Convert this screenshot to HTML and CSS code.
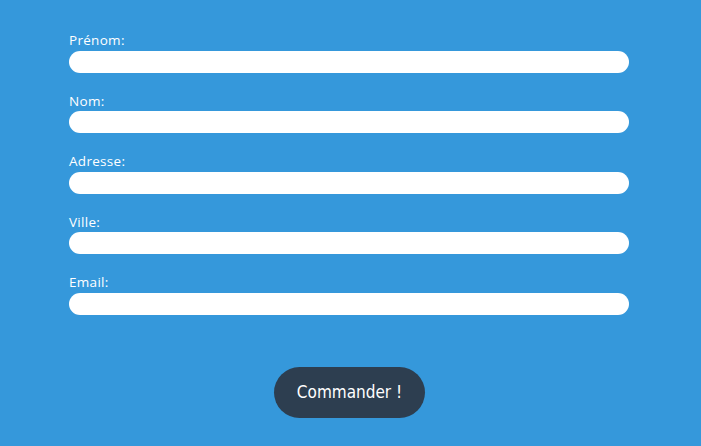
FILE: index.html
```html
<!DOCTYPE html>
<html lang="fr">
<head>
<meta charset="utf-8">
<link rel="stylesheet" href="styles.css">
</head>
<body>
<form class="order-form">
  <div class="field">
    <label class="field-label" for="prenom">Prénom:</label>
    <input class="field-input" id="prenom" type="text">
  </div>
  <div class="field">
    <label class="field-label" for="nom">Nom:</label>
    <input class="field-input" id="nom" type="text">
  </div>
  <div class="field">
    <label class="field-label" for="adresse">Adresse:</label>
    <input class="field-input" id="adresse" type="text">
  </div>
  <div class="field">
    <label class="field-label" for="ville">Ville:</label>
    <input class="field-input" id="ville" type="text">
  </div>
  <div class="field">
    <label class="field-label" for="email">Email:</label>
    <input class="field-input" id="email" type="email">
  </div>
  <div class="actions">
    <button class="submit-btn" type="button">Commander !</button>
  </div>
</form>
</body>
</html>
```

FILE: styles.css
```css
html, body {
  margin: 0;
  padding: 0;
  background: #3598db;
  height: 100%;
}
body {
  font-family: "Open Sans", "DejaVu Sans", sans-serif;
  overflow: hidden;
}
.order-form {
  width: 560px;
  margin: 0 0 0 69px;
  padding-top: 32px;
  display: flex;
  flex-direction: column;
}
.field {
  display: flex;
  flex-direction: column;
  margin-bottom: 20px;
}
.field-label {
  color: #ffffff;
  font-size: 13.5px;
  line-height: 16.5px;
  margin-bottom: 2px;
  letter-spacing: 0.3px;
  padding-left: 0;
}
.field-input {
  box-sizing: border-box;
  height: 22px;
  border: none;
  border-radius: 11px;
  background: #ffffff;
  margin: 0;
  padding: 0 10px;
  outline: none;
}
.actions {
  display: flex;
  justify-content: center;
  padding-top: 32px;
  padding-left: 1px;
}
.submit-btn {
  width: 151px;
  height: 51px;
  border: none;
  border-radius: 26px;
  background: #2d3e50;
  color: #ffffff;
  font-family: "DejaVu Sans Condensed", "DejaVu Sans", sans-serif;
  font-size: 17px;
  padding: 0;
  cursor: pointer;
}
```
